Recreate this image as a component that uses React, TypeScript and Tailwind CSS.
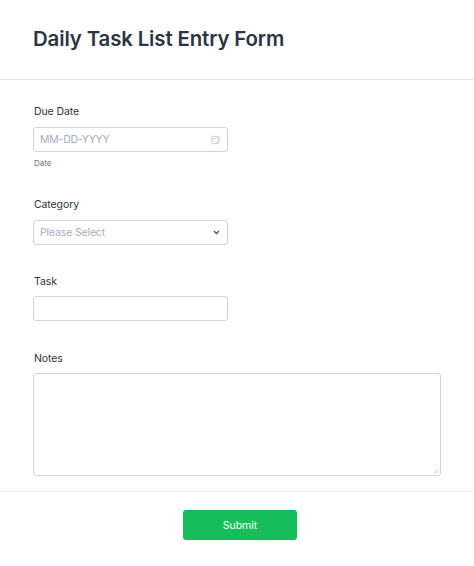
const inter = { fontFamily: "Inter, sans-serif" }

function CalendarIcon() {
  return (
    <svg width="9" height="10" viewBox="0 0 10 10" fill="none" stroke="#c2c8d3" strokeWidth="1">
      <path d="M1 3.5h8M1.5 1h7a.5.5 0 0 1 .5.5V7L7 9H1.5a.5.5 0 0 1-.5-.5v-7a.5.5 0 0 1 .5-.5z" />
      <path d="M7 9V7h2" />
    </svg>
  )
}

function ChevronIcon() {
  return (
    <svg width="7" height="5" viewBox="0 0 8 6" fill="none" stroke="#4a5163" strokeWidth="1.6">
      <path d="M1 1.2l3 3 3-3" />
    </svg>
  )
}

export default function App() {
  return (
    <div className="h-[566px] w-[474px] overflow-hidden bg-white text-[#2c3345]" style={inter}>
      <header className="h-[80px] border-b border-[#e3e5ea] pl-[33px] pt-[24px]">
        <h1 className="text-[20.4px] leading-[30px] font-semibold tracking-[-0.12px]">Daily Task List Entry Form</h1>
      </header>

      <form className="pl-[33px]">
        <div className="h-[117px] pt-[24px]">
          <label className="block pl-px text-[10.5px] leading-[16px] font-normal tracking-[-0.1px]">Due Date</label>
          <div className="mt-[7px] flex h-[25px] w-[195px] items-center justify-between rounded-[3px] border border-[#d0d3d9] pl-[6px] pr-[7px]">
            <span className="text-[10.5px] tracking-[-0.2px] text-[#a3adbd]">MM-DD-YYYY</span>
            <CalendarIcon />
          </div>
          <p className="mt-[5px] pl-px text-[8px] leading-[12px] text-[#6b7385]">Date</p>
        </div>

        <div className="h-[77px]">
          <label className="block pl-px text-[10.5px] leading-[16px] font-normal tracking-[-0.1px]">Category</label>
          <div className="mt-[7px] flex h-[25px] w-[195px] items-center justify-between rounded-[3px] border border-[#d0d3d9] pl-[6px] pr-[7px]">
            <span className="text-[10.5px] tracking-[-0.15px] text-[#a3adbd]">Please Select</span>
            <ChevronIcon />
          </div>
        </div>

        <div className="h-[77px]">
          <label className="block pl-px text-[10.5px] leading-[16px] font-normal tracking-[-0.1px]">Task</label>
          <div className="mt-[6px] h-[25px] w-[195px] rounded-[3px] border border-[#d0d3d9]" />
        </div>

        <div className="h-[140px]">
          <label className="block pl-px text-[10.5px] leading-[16px] font-normal tracking-[-0.1px]">Notes</label>
          <div className="relative mt-[6px] h-[103px] w-[408px] rounded-[3px] border border-[#d0d3d9]">
            <svg className="absolute right-[1px] bottom-[1px]" width="6" height="6" viewBox="0 0 6 6" stroke="#c0c4cb" strokeWidth="0.8">
              <path d="M0.5 5.5l5-5M3 5.5l2.5-2.5" />
            </svg>
          </div>
        </div>
      </form>

      <footer className="flex justify-center border-t border-[#eceef1] pl-[6px] pt-[18px]">
        <button className="h-[30px] w-[114px] rounded-[3px] bg-[#18bd5b] pt-px text-[10.5px] font-normal text-white">Submit</button>
      </footer>
    </div>
  )
}
